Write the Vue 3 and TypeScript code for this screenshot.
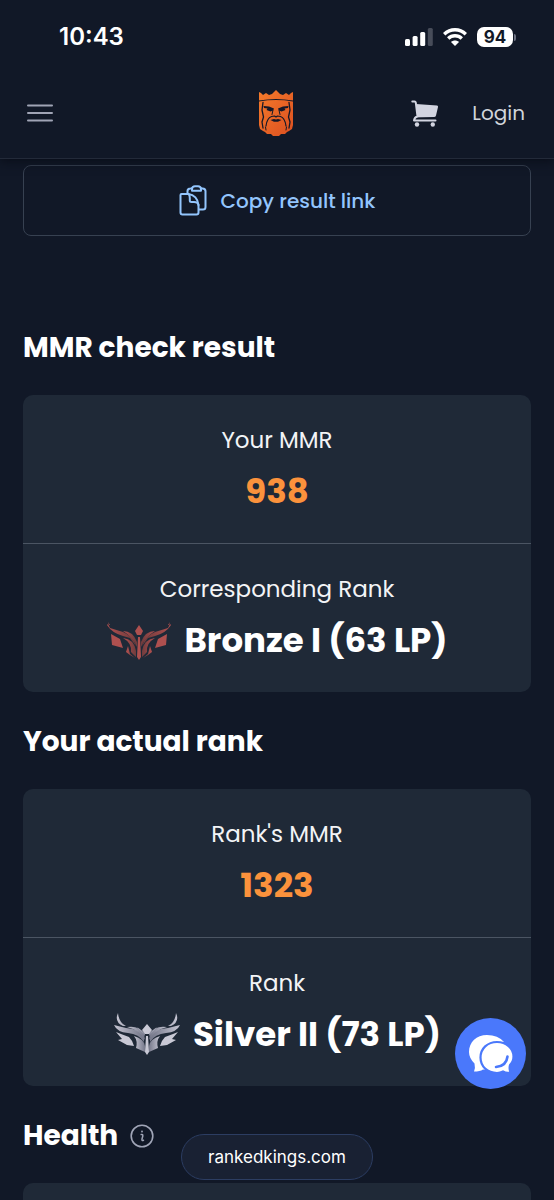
<script setup lang="ts">
interface RankSection {
  title: string
  mmrLabel: string
  mmr: number
  rankLabel: string
  rank: string
  tier: 'bronze' | 'silver'
}

const sections: RankSection[] = [
  {
    title: 'MMR check result',
    mmrLabel: 'Your MMR',
    mmr: 938,
    rankLabel: 'Corresponding Rank',
    rank: 'Bronze I (63 LP)',
    tier: 'bronze',
  },
  {
    title: 'Your actual rank',
    mmrLabel: "Rank's MMR",
    mmr: 1323,
    rankLabel: 'Rank',
    rank: 'Silver II (73 LP)',
    tier: 'silver',
  },
]
</script>

<template>
  <div class="page">
    <header class="top">
      <div class="status">
        <time class="clock">10:43</time>
        <div class="indicators">
          <svg width="28" height="18" viewBox="0 0 28 18" aria-hidden="true">
            <rect x="0" y="11" width="5" height="7" rx="1.5" fill="#fff" />
            <rect x="7.6" y="8" width="5" height="10" rx="1.5" fill="#fff" />
            <rect x="15.2" y="4" width="5" height="14" rx="1.5" fill="#fff" />
            <rect x="22.8" y="0" width="5" height="18" rx="1.5" fill="#474c59" />
          </svg>
          <svg width="24" height="18" viewBox="0 0 24 18" aria-hidden="true">
            <g fill="none" stroke="#fff" stroke-width="3.4">
              <path d="M1.2 6.2C7.3 .3 16.7 .3 22.8 6.2" />
              <path d="M5.2 10.4C9 6.8 15 6.8 18.8 10.4" />
            </g>
            <path d="M12 18L8 13.9C10.2 11.9 13.8 11.9 16 13.9Z" fill="#fff" />
          </svg>
          <div class="battery">
            <span class="level">94</span>
            <span class="tip"></span>
          </div>
        </div>
      </div>

      <nav class="nav">
        <button class="icon-button" type="button" aria-label="Open menu">
          <svg width="26" height="18" viewBox="0 0 26 18">
            <path d="M1 1.5H25M1 9H25M1 16.5H25" stroke="#a0a4b5" stroke-width="2" stroke-linecap="round" />
          </svg>
        </button>
        <a class="logo" href="#" aria-label="Ranked Kings">
          <svg width="36" height="46" viewBox="0 0 36 46">
            <defs>
              <linearGradient id="king" x1="0" y1="0" x2="1" y2="1">
                <stop offset="0" stop-color="#f47b2b" />
                <stop offset="1" stop-color="#dc4f20" />
              </linearGradient>
            </defs>
            <path
              d="M1 2L3 3 5 5 8 3 11 5 14 4 18 0 22 4 25 5 28 3 31 5 33 3 35 2V35L34 39 31 41 29 42 27 44 23 44 21 46H15L13 44 9 44 7 42 5 41 2 39 1 35Z"
              fill="url(#king)"
            />
            <g fill="none" stroke="#151828" stroke-linecap="round" stroke-linejoin="round">
              <path d="M1 11Q18 8 35 11" stroke-width="1.2" />
              <path d="M5 12.500L4 20 5.500 27 4 32 5 38M31 12.500L32 20 30.500 27 32 32 31 38" stroke-width="1.300" />
              <path d="M8 36Q9 28 13.500 26.500L16.500 26 18 27 19.500 26 22.500 26.500Q27 28 28 36" stroke-width="1.200" />
              <path d="M15 20L14 24.500M21 20L22 24.500M8 40L7.500 37M28 40L28.500 37" stroke-width="1" />
            </g>
            <path
              d="M5.500 16L11 16.500 16 18.500 15 20.500 12.500 21.500 8.500 20 9.500 18.500 6 18ZM30.500 16L25 16.500 20 18.500 21 20.500 23.500 21.500 27.500 20 26.500 18.500 30 18ZM12.500 30L16 29 18 29.500 20 29 23.500 30 20 31.800H16Z"
              fill="#151828"
            />
          </svg>
        </a>
        <div class="account">
          <a class="cart" href="#" aria-label="Cart">
            <svg width="28" height="27" viewBox="0 0 28 27">
              <path d="M5 4L26 5.500Q27.300 5.700 27 7L25 15.500Q24.600 17 23 17L6.500 17.500Z" fill="#d2d4e0" />
              <path
                d="M1.300 1.500H3.500Q4.600 1.500 4.800 2.700L6.500 16.500Q3.500 17 3 20.500H24.500"
                fill="none" stroke="#d2d4e0" stroke-width="2" stroke-linecap="round" stroke-linejoin="round"
              />
              <path d="M6.800 18.200H24" stroke="#111827" stroke-width="1" />
              <circle cx="6" cy="24.500" r="2.200" fill="#d2d4e0" />
              <circle cx="21.800" cy="24.500" r="2.200" fill="#d2d4e0" />
            </svg>
          </a>
          <a class="login" href="#">Login</a>
        </div>
      </nav>
    </header>

    <main class="content">
      <button class="copy" type="button">
        <svg width="28" height="31" viewBox="0 0 28 31" fill="none" stroke="#93c5fd" stroke-width="2" stroke-linejoin="round" stroke-linecap="round" aria-hidden="true">
          <path d="M2.500 9H9.500C15 9.500 19 14 19.500 20V27.500Q19.500 29.500 17.500 29.500H3.500Q1.500 29.500 1.500 27.500V10Q1.500 9 2.500 9Z" />
          <path d="M9.500 9Q10.800 10 10.800 13V15.500Q10.800 17 12.500 17H15Q19 17 19.500 20" />
          <path d="M8.500 8.500V6Q8.500 3.500 11.500 3.400L13 3.300M22 3.300L23.500 3.400Q26.500 3.700 26.500 6V22Q26.500 24.500 24 24.500H20" />
          <path d="M13 5.800V4Q13.200 1.200 16 1.200H19Q21.800 1.200 22 4V5.800Z" />
        </svg>
        <span>Copy result link</span>
      </button>

      <section v-for="section in sections" :key="section.title" class="section">
        <h2 class="title">{{ section.title }}</h2>
        <div class="card">
          <div class="cell">
            <p class="label">{{ section.mmrLabel }}</p>
            <p class="value mmr">{{ section.mmr }}</p>
          </div>
          <div class="cell">
            <p class="label">{{ section.rankLabel }}</p>
            <p class="value rank">
              <svg v-if="section.tier === 'bronze'" width="66" height="40" viewBox="0 0 66 40" aria-hidden="true">
                <defs>
                  <linearGradient id="bronze" x1="0" y1="0" x2="1" y2="0">
                    <stop offset="0" stop-color="#b2504f" />
                    <stop offset=".4" stop-color="#713c3d" />
                    <stop offset=".6" stop-color="#713c3d" />
                    <stop offset="1" stop-color="#b2504f" />
                  </linearGradient>
                </defs>
                <g fill="url(#bronze)">
                  <path d="M1 5L2 4 4 8 17 12Q27 16 30 26L24 18 17 16Q6 13 1 5ZM65 5L64 4 62 8 49 12Q39 16 36 26L42 18 49 16Q60 13 65 5Z" />
                  <path d="M17 11Q27 11 31 22V27Q27 17 17 11ZM49 11Q39 11 35 22V27Q39 17 49 11Z" />
                  <path d="M17 18Q28 19 30 31V37L25 32Q26 23 17 18ZM49 18Q38 19 36 31V37L41 32Q40 23 49 18Z" />
                  <path d="M22 26L24 34 29 38 24 35 20 32ZM44 26L42 34 37 38 42 35 46 32Z" />
                </g>
                <path d="M5 14L14 19 17 28 6 25ZM61 14L52 19 49 28 60 25ZM33 5L37 11 35 15H31L29 11ZM32 17H34L35 37 33 40 31 37ZM2 2L4 5H3ZM64 2L62 5H63Z" fill="#ae504f" />
              </svg>
              <svg v-else width="68" height="44" viewBox="0 0 68 44" aria-hidden="true">
                <defs>
                  <linearGradient id="silver" x1="0" y1="0" x2="1" y2="0">
                    <stop offset="0" stop-color="#c5c5d2" />
                    <stop offset=".42" stop-color="#777a8c" />
                    <stop offset=".58" stop-color="#777a8c" />
                    <stop offset="1" stop-color="#c5c5d2" />
                  </linearGradient>
                </defs>
                <g fill="url(#silver)">
                  <path d="M5 1Q6 11 13 14H10Q1 10 5 1ZM63 1Q62 11 55 14H58Q67 10 63 1Z" />
                  <path d="M1 13L13 16Q28 17 31 26V30Q26 22 15 21 4 20 1 13ZM67 13L55 16Q40 17 37 26V30Q42 22 53 21 64 20 67 13Z" />
                  <path d="M14 15Q26 13 31 22L32 28Q27 18 14 15ZM54 15Q42 13 37 22L36 28Q41 18 54 15Z" />
                  <path d="M21 24Q31 27 32 34V40L23 36Q25 29 21 24ZM47 24Q37 27 36 34V40L45 36Q43 29 47 24Z" />
                  <path d="M24 15L32 21V24ZM44 15L36 21V24Z" />
                </g>
                <path d="M3 20L8 22 16 25Q20 29 21 34L14 33 5 28 9 27ZM65 20L60 22 52 25Q48 29 47 34L54 33 63 28 59 27ZM34 12L39 18 36 22H32L29 18ZM33 24H35L36 40 34 43 32 40Z" fill="#c9c9d5" />
              </svg>
              <span>{{ section.rank }}</span>
            </p>
          </div>
        </div>
      </section>

      <section class="section">
        <h2 class="title">
          <span>Health</span>
          <button class="icon-button" type="button" aria-label="About health">
            <svg width="24" height="24" viewBox="0 0 24 24" fill="none" stroke="#a0a5b7" stroke-linecap="round">
              <circle cx="12" cy="12" r="10.800" stroke-width="1.600" />
              <path d="M11.200 10.500Q13 10 12.800 12L12 15Q11.500 17 13.500 16.300" stroke-width="1.500" />
              <circle cx="12" cy="7.500" r=".4" stroke-width="1.200" />
            </svg>
          </button>
        </h2>
        <div class="card">
          <div class="cell"></div>
        </div>
      </section>
    </main>

    <button class="chat" type="button" aria-label="Open chat">
      <svg width="46" height="40" viewBox="0 0 46 40">
        <path d="M19 1C8.500 1 1 8 1 18Q1 24 6.500 29.500Q7.500 33.500 6 37.500Q12 37.500 15 35.500L20 36 36 8Q30 1 19 1Z" fill="#fff" />
        <path d="M29 8C19.500 8 12.500 14.500 12.500 23.500S19.500 39 29 39Q32 39 35 37.500 38.500 39.500 42.500 38.500 41 35 42 31 45.500 27.500 45.500 22.500C45.500 14 38 8 29 8Z" fill="#fff" stroke="#4a78fb" stroke-width="2.200" />
        <path d="M39.500 22.500Q38.500 32 28 33" fill="none" stroke="#4a78fb" stroke-width="2.600" stroke-linecap="round" />
      </svg>
    </button>

    <footer class="address-bar">
      <a class="address" href="#">rankedkings.com</a>
    </footer>
  </div>
</template>

<style>
body {
  margin: 0;
  background: #111827;
}
</style>

<style scoped>
.page {
  height: 100vh;
  overflow: hidden;
  background: #111827;
  color: #fff;
  font-family: Poppins, Inter, "Noto Sans", sans-serif;
}

.top {
  position: relative;
  border-bottom: 1px solid #232a39;
  background: #111827;
  box-shadow: 0 2px 10px #090d18;
}

.status {
  display: flex;
  align-items: center;
  justify-content: space-between;
  height: 74px;
  padding: 0 38px 0 59px;
}

.clock {
  font: 600 24px/28px Inter, sans-serif;
}

.indicators {
  display: flex;
  align-items: center;
  gap: 10px;
}

.battery {
  display: flex;
  align-items: center;
  gap: 1px;
}

.level {
  width: 36px;
  border-radius: 7px;
  background: #fff;
  color: #111827;
  font: 700 17px/20px Inter, sans-serif;
  text-align: center;
}

.tip {
  width: 2px;
  height: 7px;
  border-radius: 0 2px 2px 0;
  background: #6b7080;
}

.nav {
  display: grid;
  grid-template-columns: 1fr auto 1fr;
  align-items: center;
  height: 84px;
  padding: 0 29px 6px 27px;
  box-sizing: border-box;
}

.icon-button {
  display: flex;
  justify-self: start;
  padding: 0;
  border: 0;
  background: none;
}

.logo,
.cart {
  display: flex;
}

.account {
  display: flex;
  align-items: center;
  justify-content: flex-end;
  gap: 33px;
}

.login {
  color: #d1d5db;
  font-size: 20px;
  line-height: 28px;
  text-decoration: none;
}

.content {
  padding: 6px 23px 0;
}

.copy {
  display: flex;
  align-items: center;
  justify-content: center;
  gap: 14px;
  width: 100%;
  height: 71px;
  margin-bottom: 92px;
  border: 1px solid #374151;
  border-radius: 8px;
  background: none;
  color: #93c5fd;
  font: 500 20px/28px Poppins, Inter, sans-serif;
}

.section {
  margin-bottom: 30px;
}

.title {
  display: flex;
  align-items: center;
  gap: 12px;
  margin: 0 0 27px;
  font-size: 28px;
  font-weight: 700;
  line-height: 40px;
}

.card {
  border-radius: 10px;
  background: #1f2937;
}

.cell {
  min-height: 94px;
  padding: 28px 16px 26px;
  text-align: center;
}

.cell + .cell {
  border-top: 1px solid #4b5563;
}

.label {
  margin: 0 0 8px;
  color: #f3f4f6;
  font-size: 23px;
  line-height: 34px;
}

.value {
  display: flex;
  align-items: center;
  justify-content: center;
  gap: 12px;
  margin: 0;
  font-size: 34px;
  font-weight: 700;
  line-height: 52px;
}

.mmr {
  color: #fb923c;
}

.chat {
  position: fixed;
  right: 28px;
  bottom: 111px;
  display: flex;
  align-items: center;
  justify-content: center;
  width: 71px;
  height: 71px;
  padding: 0;
  border: 0;
  border-radius: 50%;
  background: #4a78fb;
}

.address-bar {
  position: fixed;
  right: 0;
  bottom: 20px;
  left: 0;
  display: flex;
  justify-content: center;
}

.address {
  padding: 8px 26px;
  border: 1px solid #2c3d62;
  border-radius: 24px;
  background: #192133;
  color: #fff;
  font: 400 17px/28px Inter, sans-serif;
  text-decoration: none;
}
</style>
